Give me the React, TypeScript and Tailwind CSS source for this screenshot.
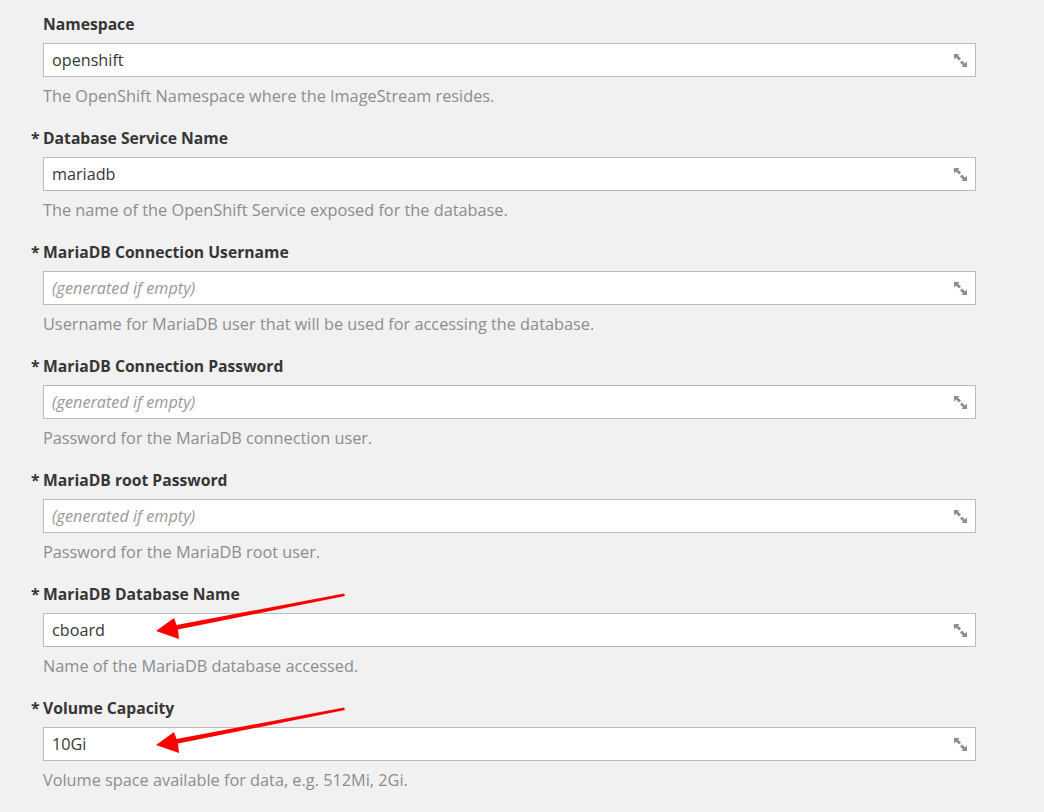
import React from "react";

const ResizeIcon = () => (
  <svg width="15" height="15" viewBox="0 0 15 15" className="shrink-0">
    <g fill="#8a8f96">
      <polygon points="1,1 6.5,1 5,2.5 8,5.5 6,7.5 3,4.5 1,6.5" />
      <polygon points="14,14 8.5,14 10,12.5 7,9.5 9,7.5 12,10.5 14,8.5" />
    </g>
  </svg>
);

type Field = {
  label: string;
  required?: boolean;
  value?: string;
  help: string;
  arrow?: boolean;
};

const fields: Field[] = [
  { label: "Namespace", value: "openshift", help: "The OpenShift Namespace where the ImageStream resides." },
  { label: "Database Service Name", required: true, value: "mariadb", help: "The name of the OpenShift Service exposed for the database." },
  { label: "MariaDB Connection Username", required: true, help: "Username for MariaDB user that will be used for accessing the database." },
  { label: "MariaDB Connection Password", required: true, help: "Password for the MariaDB connection user." },
  { label: "MariaDB root Password", required: true, help: "Password for the MariaDB root user." },
  { label: "MariaDB Database Name", required: true, value: "cboard", help: "Name of the MariaDB database accessed.", arrow: true },
  { label: "Volume Capacity", required: true, value: "10Gi", help: "Volume space available for data, e.g. 512Mi, 2Gi.", arrow: true },
];

const Arrow = () => (
  <svg width="210" height="50" viewBox="0 0 210 50" className="absolute left-[100px] top-[-22px] pointer-events-none">
    <polygon points="12,39 30,26 32.5,33 200,1.5 201,4 34,37.5 35,47" fill="#ff0000" />
  </svg>
);

export default function App() {
  return (
    <div
      className="w-[1044px] h-[812px] bg-[#f1f1f1] overflow-hidden pl-[43px] pr-[68px] pt-[14px] flex flex-col gap-[22px]"
      style={{ fontFamily: '"Open Sans", "Noto Sans", sans-serif' }}
    >
      {fields.map((f, i) => (
        <div key={i} className="flex flex-col gap-[9px]">
          <div className="flex h-[20px] leading-[20px] text-[15.7px] font-bold text-[#363636]">
            {f.required && <span className="ml-[-12px] w-[12px]">*</span>}
            <span>{f.label}</span>
          </div>
          <div className="relative h-[34px] bg-white border border-[#bbbbbb] flex items-center justify-between pl-[8px] pr-[7px]">
            {f.value ? (
              <span className="text-[16.2px] text-[#363636]">{f.value}</span>
            ) : (
              <span className="text-[16.2px] italic text-[#999999]">(generated if empty)</span>
            )}
            {f.arrow && <Arrow />}
            <ResizeIcon />
          </div>
          <div className="h-[20px] leading-[20px] text-[16.3px] text-[#8b8d8f]">{f.help}</div>
        </div>
      ))}
    </div>
  );
}
